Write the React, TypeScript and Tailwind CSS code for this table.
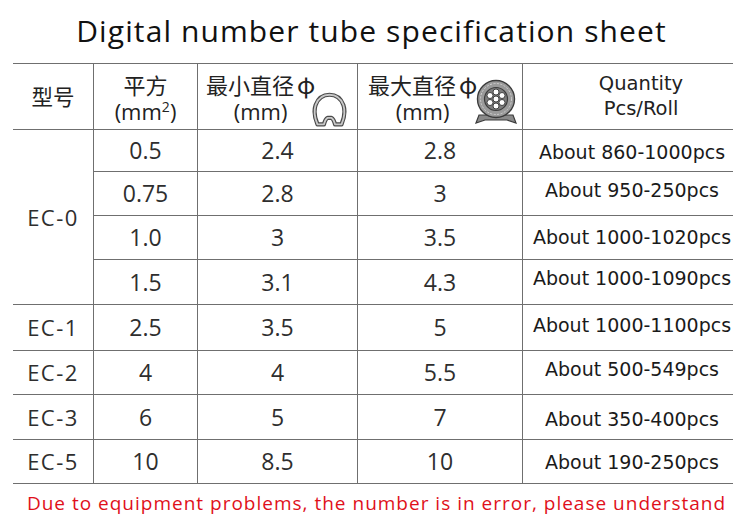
const SANS = "font-['Open_Sans','Noto_Sans_CJK_SC',sans-serif]";
const CJK = "font-['Noto_Sans_CJK_SC','Noto_Sans',sans-serif]";
const QTY = "font-['DejaVu_Sans',sans-serif]";

const LINE = 'border-[#6f6f6f]';

type Row = { mm: string; min: string; max: string; qty: string; q?: string };

const EC0: Row[] = [
  { mm: '0.5', min: '2.4', max: '2.8', qty: 'About 860-1000pcs', q: 'pt-[4px]' },
  { mm: '0.75', min: '2.8', max: '3', qty: 'About 950-250pcs', q: 'pb-[6px]' },
  { mm: '1.0', min: '3', max: '3.5', qty: 'About 1000-1020pcs' },
  { mm: '1.5', min: '3.1', max: '4.3', qty: 'About 1000-1090pcs', q: 'pb-[8px]' },
];

const REST: (Row & { model: string })[] = [
  { model: 'EC-1', mm: '2.5', min: '3.5', max: '5', qty: 'About 1000-1100pcs', q: 'pb-[4px]' },
  { model: 'EC-2', mm: '4', min: '4', max: '5.5', qty: 'About 500-549pcs', q: 'pb-[6px]' },
  { model: 'EC-3', mm: '6', min: '5', max: '7', qty: 'About 350-400pcs', q: 'pt-[4px]' },
  { model: 'EC-5', mm: '10', min: '8.5', max: '10', qty: 'About 190-250pcs', q: 'pt-[2px]' },
];

function TubeIcon() {
  // cross-section of the empty tube
  const d =
    'M7 35 C4 28 3 20 5 14 C8 6 14 3 20 3 C26 3 32 6 35 14 C37 20 36 28 33 35 L26 35 C25 31 24 29 22 28 L18 28 C16 29 15 31 14 35 Z';
  return (
    <svg width="37" height="37" viewBox="0 0 40 40" className="shrink-0 -ml-[4px]">
      <path d={d} fill="none" stroke="#4a4a4a" strokeWidth="4.5" strokeLinejoin="round" />
      <path d={d} fill="none" stroke="#c8c8c8" strokeWidth="2" strokeLinejoin="round" />
    </svg>
  );
}

function WireIcon() {
  // tube with wire strands inside
  const pts = [
    [23, 13],
    [29, 16.5],
    [29, 23.5],
    [23, 27],
    [17, 23.5],
    [17, 16.5],
    [23, 20],
  ];
  return (
    <svg width="46" height="46" viewBox="0 0 46 46" className="shrink-0 -ml-[4px]">
      <path d="M3 44 L6 36 L40 36 L43 44 L34 41 L12 41 Z" fill="#8a8a8a" stroke="#3c3c3c" strokeWidth="1.2" />
      <circle cx="23" cy="20" r="18.5" fill="#9a9a9a" stroke="#3c3c3c" strokeWidth="1.4" />
      <circle cx="23" cy="20" r="15.5" fill="none" stroke="#d0d0d0" strokeWidth="1" strokeDasharray="2 1.5" />
      <circle cx="23" cy="20" r="11.5" fill="#7c7c7c" stroke="#3c3c3c" strokeWidth="1.2" />
      {pts.map(([x, y], i) => (
        <circle key={i} cx={x} cy={y} r="3" fill="#fff" stroke="#333" strokeWidth="0.9" />
      ))}
    </svg>
  );
}

function Num({ children, className = '' }: { children: React.ReactNode; className?: string }) {
  return (
    <div className={`flex items-center justify-center border-b border-l ${LINE} text-[23px] text-[#2e2e2e] ${className}`}>
      {children}
    </div>
  );
}

function Qty({ children, className = '' }: { children: React.ReactNode; className?: string }) {
  return (
    <div
      className={`${QTY} flex items-center justify-center pl-[8px] whitespace-nowrap border-b border-l ${LINE} text-[19px] text-[#1a1a1a] ${className}`}
    >
      {children}
    </div>
  );
}

function Head({ label }: { label: string }) {
  return (
    <div className="flex flex-col items-center text-[22px] leading-[27px]">
      <span className={`${CJK} whitespace-nowrap leading-[27px]`}>
        {label}
        <span className="ml-[3px] text-[24px]">φ</span>
      </span>
      <span>(mm)</span>
    </div>
  );
}

export default function App() {
  return (
    <div className={`${SANS} w-[743px] h-[523px] bg-white overflow-hidden`}>
      <h1 className="h-[63px] flex items-center justify-center pb-[2px] text-[30px] tracking-[1.1px] text-[#111]">
        Digital number tube specification sheet
      </h1>

      <div
        className={`ml-[13px] w-[720px] grid grid-cols-[80px_104px_160px_165px_211px] grid-rows-[66px_42px_44px_44px_45px_46px_44px_45px_44px] border-t ${LINE}`}
      >
        {/* header */}
        <div className={`${CJK} flex items-center justify-center border-b ${LINE} text-[21.5px] text-[#222]`}>
          型号
        </div>
        <div
          className={`flex flex-col items-center justify-center border-b border-l ${LINE} text-[22px] leading-[27px] text-[#222] pt-[2px]`}
        >
          <span className={CJK}>平方</span>
          <span>
            (mm<sup className="text-[14px] -top-[8px]">2</sup>)
          </span>
        </div>
        <div className={`flex items-end pl-[8px] border-b border-l ${LINE} text-[#222]`}>
          <div className="pb-[4px]">
            <Head label="最小直径" />
          </div>
          <TubeIcon />
        </div>
        <div className={`flex items-end pl-[10px] pb-[4px] border-b border-l ${LINE} text-[#222]`}>
          <Head label="最大直径" />
          <WireIcon />
        </div>
        <div
          className={`${QTY} flex flex-col items-center justify-center pl-[26px] pb-[2px] border-b border-l ${LINE} text-[19.5px] leading-[25px] text-[#222]`}
        >
          <span>Quantity</span>
          <span>Pcs/Roll</span>
        </div>

        {/* EC-0 group */}
        <div
          className={`row-span-4 flex items-center justify-center border-b ${LINE} text-[22px] tracking-[1.5px] text-[#2e2e2e]`}
        >
          EC-0
        </div>
        {EC0.map((r) => (
          <div key={r.mm} className="contents">
            <Num>{r.mm}</Num>
            <Num>{r.min}</Num>
            <Num>{r.max}</Num>
            <Qty className={r.q}>{r.qty}</Qty>
          </div>
        ))}

        {REST.map((r) => (
          <div key={r.model} className="contents">
            <div
              className={`flex items-center justify-center border-b ${LINE} text-[22px] tracking-[1.5px] text-[#2e2e2e]`}
            >
              {r.model}
            </div>
            <Num>{r.mm}</Num>
            <Num>{r.min}</Num>
            <Num>{r.max}</Num>
            <Qty className={r.q}>{r.qty}</Qty>
          </div>
        ))}
      </div>

      <p className="h-[39px] flex items-center justify-center pl-[10px] text-[19px] tracking-[1px] text-[#e0101a]">
        Due to equipment problems, the number is in error, please understand
      </p>
    </div>
  );
}
